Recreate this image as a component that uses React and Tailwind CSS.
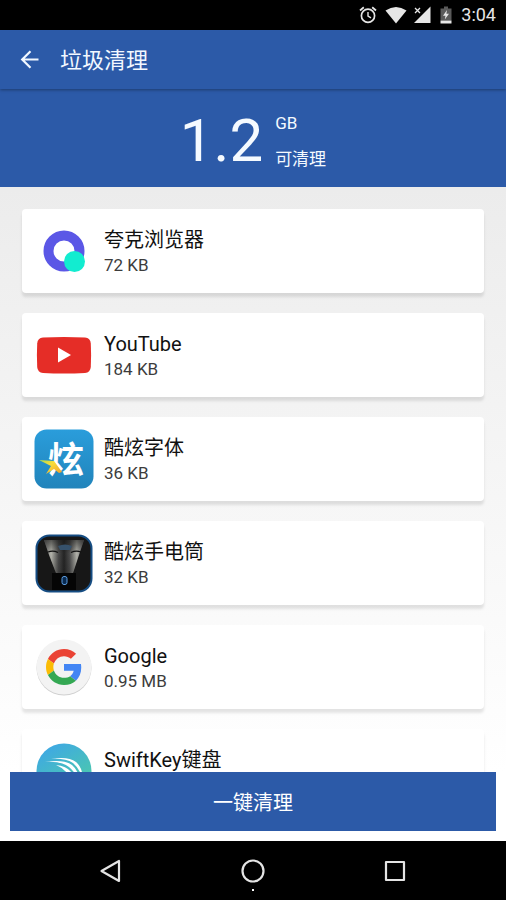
const QuarkIcon = () => (
  <svg viewBox="0 0 60 60" className="size-15" aria-hidden="true">
    <circle cx="30" cy="30" r="15.5" fill="none" stroke="#5b57e6" strokeWidth="10" />
    <circle cx="40.5" cy="40.5" r="10.5" fill="#12ecd0" />
  </svg>
);

const YouTubeIcon = () => (
  <svg viewBox="0 0 60 60" className="size-15" aria-hidden="true">
    <path
      d="M9 12.4Q30 11.4 51 12.4Q56.4 12.8 56.8 18.500Q57.4 30 56.8 42Q56.4 47.6 51 48Q30 49 9 48Q3.600 47.600 3.200 42Q2.600 30 3.200 18.500Q3.600 12.800 9 12.400Z"
      fill="#e52d27"
    />
    <path d="M24 22.500L37 30L24 37.500Z" fill="#fff" />
  </svg>
);

const FontIcon = () => (
  <svg viewBox="0 0 60 60" className="size-15 overflow-visible" aria-hidden="true">
    <defs>
      <linearGradient id="font-bg" x1="0" y1="0" x2="0" y2="1">
        <stop offset="0" stopColor="#2a9ddb" />
        <stop offset="1" stopColor="#2184bb" />
      </linearGradient>
      <linearGradient id="font-flash" x1="0" y1="0" x2="1" y2="1">
        <stop offset="0" stopColor="#a8d94c" />
        <stop offset="0.4" stopColor="#f7dd3a" />
        <stop offset="1" stopColor="#f3a02b" />
      </linearGradient>
    </defs>
    <rect x="0.500" y="0.500" width="59" height="59" rx="12" fill="url(#font-bg)" />
    <text
      x="14"
      y="44"
      fontSize="36"
      fontWeight="700"
      fill="#fff"
      fontFamily="'Noto Sans CJK SC', sans-serif"
    >
      炫
    </text>
    <path d="M5 31L20 32L28 43L25 44L20 40L12 45L17 37Z" fill="url(#font-flash)" />
  </svg>
);

const TorchIcon = () => (
  <svg viewBox="0 0 60 60" className="size-15" aria-hidden="true">
    <defs>
      <linearGradient id="torch-beam" x1="0" y1="0" x2="1" y2="0">
        <stop offset="0" stopColor="#6e6e6e" />
        <stop offset="0.18" stopColor="#b4b4ac" />
        <stop offset="0.36" stopColor="#4a4a4a" />
        <stop offset="0.5" stopColor="#242424" />
        <stop offset="0.64" stopColor="#4a4a4a" />
        <stop offset="0.82" stopColor="#b4b4ac" />
        <stop offset="1" stopColor="#606060" />
      </linearGradient>
      <linearGradient id="torch-fade" x1="0" y1="0" x2="0" y2="1">
        <stop offset="0" stopColor="#171717" stopOpacity="0.600" />
        <stop offset="0.4" stopColor="#171717" stopOpacity="0" />
        <stop offset="1" stopColor="#171717" stopOpacity="0.200" />
      </linearGradient>
    </defs>
    <rect x="2.500" y="2.500" width="55" height="56" rx="13" fill="#171717" stroke="#164d83" strokeWidth="2" />
    <path d="M10 7H50L45 22L39 40H22L15 22Z" fill="url(#torch-beam)" />
    <path d="M10 7H50L45 22L39 40H22L15 22Z" fill="url(#torch-fade)" />
    <path d="M14 19Q19 17 24 19.500M37 19.500Q42 17 47 19" stroke="#111" strokeWidth="1.200" fill="none" />
    <path d="M24 13Q31 10 38 13L36 17H26Z" fill="#36516b" />
    <path d="M18 40H42V57H18Z" fill="#050505" />
    <rect x="28" y="43.500" width="5" height="8" rx="2" fill="#092a50" stroke="#5c9ce0" strokeWidth="1" />
  </svg>
);

const GoogleIcon = () => (
  <svg viewBox="0 0 60 60" className="size-15" aria-hidden="true">
    <circle cx="30" cy="31" r="27.500" fill="#cfcfcf" />
    <circle cx="30" cy="30" r="27.500" fill="#f3f3f3" />
    <g transform="translate(12 12) scale(0.75)">
      <path
        fill="#ea4335"
        d="M24 9.500c3.540 0 6.710 1.220 9.210 3.600l6.850-6.850C35.900 2.380 30.470 0 24 0 14.620 0 6.510 5.380 2.560 13.220l7.980 6.190C12.430 13.720 17.740 9.500 24 9.500z"
      />
      <path
        fill="#4285f4"
        d="M46.980 24.550c0-1.570-.15-3.090-.38-4.550H24v9.020h12.940c-.58 2.960-2.260 5.480-4.780 7.180l7.730 6c4.510-4.180 7.090-10.360 7.090-17.650z"
      />
      <path
        fill="#fbbc05"
        d="M10.530 28.590c-.48-1.450-.76-2.990-.76-4.590s.27-3.140.76-4.590l-7.980-6.190C.92 16.460 0 20.120 0 24c0 3.880.92 7.540 2.560 10.780l7.970-6.190z"
      />
      <path
        fill="#34a853"
        d="M24 48c6.480 0 11.930-2.130 15.890-5.810l-7.730-6c-2.150 1.450-4.920 2.300-8.160 2.300-6.260 0-11.570-4.220-13.470-9.910l-7.980 6.190C6.510 42.620 14.620 48 24 48z"
      />
    </g>
  </svg>
);

const SwiftKeyIcon = () => (
  <svg viewBox="0 0 60 60" className="size-15" aria-hidden="true">
    <defs>
      <linearGradient id="swift-bg" x1="0.200" y1="0" x2="0.800" y2="1">
        <stop offset="0" stopColor="#3ea7e6" />
        <stop offset="1" stopColor="#4fd0a0" />
      </linearGradient>
    </defs>
    <circle cx="30" cy="30" r="27.500" fill="url(#swift-bg)" />
    <g fill="#fff">
      <path d="M17 18Q34 15 42 21Q49 27 48.500 38Q46 28 39 22Q31 17 17 18Z" />
      <path d="M11 21Q30 18 38 24Q45 30 45.500 40Q41 31 35 26Q27 20 11 21Z" />
      <path d="M22 24Q33 25 38 32Q41 37 41 42Q36 34 31 30Q27 26 22 24Z" />
    </g>
  </svg>
);

const apps = [
  { name: '夸克浏览器', size: '72 KB', Icon: QuarkIcon },
  { name: 'YouTube', size: '184 KB', Icon: YouTubeIcon },
  { name: '酷炫字体', size: '36 KB', Icon: FontIcon },
  { name: '酷炫手电筒', size: '32 KB', Icon: TorchIcon },
  { name: 'Google', size: '0.95 MB', Icon: GoogleIcon },
  { name: 'SwiftKey键盘', size: '', Icon: SwiftKeyIcon },
];

const StatusBar = () => (
  <div className="flex h-[30px] shrink-0 items-center justify-end bg-black pr-2.5 text-[#e6e6e6]">
    <svg viewBox="0 0 18 18" className="mr-2 size-[18px]" fill="none" stroke="currentColor" aria-hidden="true">
      <circle cx="9" cy="9.800" r="6.600" strokeWidth="1.700" />
      <path d="M9 6V10L12 11.800" strokeWidth="1.400" />
      <path d="M1 4.500L4.800 1.300M17 4.500L13.200 1.300" strokeWidth="1.800" />
    </svg>
    <svg viewBox="0 0 22 18" className="mr-1.5 h-[18px] w-[22px]" fill="currentColor" aria-hidden="true">
      <path d="M0.500 4.500Q11 -2.500 21.500 4.500L11 17.500Z" />
    </svg>
    <svg viewBox="0 0 18 18" className="mr-2 size-[18px]" aria-hidden="true">
      <path d="M17.500 0.500V17H1Z" fill="currentColor" />
      <path d="M0 0H9V8L6 10H0Z" fill="#000" />
      <path d="M2 2L7 7M7 2L2 7" stroke="currentColor" strokeWidth="1.300" />
    </svg>
    <svg viewBox="0 0 14 18" className="mr-2 h-[18px] w-3.5" aria-hidden="true">
      <path d="M5 0.500H9V2.500H12.500V14.500H1.500V2.500H5Z" fill="#5a5a5a" />
      <path d="M1.500 14.500H12.500V17.500H1.500Z" fill="currentColor" />
      <path d="M8 4L4 9.800H6.500L5.800 13.500L10 7.800H7.400Z" fill="currentColor" />
    </svg>
    <span className="text-[18px] leading-5">3:04</span>
  </div>
);

const AppCard = ({ name, size, Icon }) => (
  <li className="flex h-21 shrink-0 items-center gap-2.5 rounded-sm bg-white px-3 shadow-[0_4px_3px_rgba(0,0,0,0.1)]">
    <Icon />
    <div className="pt-0.5">
      <h2 className="text-[20px] leading-[26px] text-[#111]">{name}</h2>
      <p className="h-6 text-[17px] leading-6 text-[#3c3c3c]">{size}</p>
    </div>
  </li>
);

const NavBar = () => (
  <nav className="flex h-[59px] shrink-0 items-center justify-center gap-[106px] bg-black text-[#e4e4e4]">
    <button type="button" aria-label="返回" className="size-9 p-1.5">
      <svg viewBox="0 0 24 24" className="size-6" fill="none" stroke="currentColor" strokeWidth="2.200" strokeLinejoin="round">
        <path d="M20 2V22L2.500 12Z" />
      </svg>
    </button>
    <button type="button" aria-label="主屏幕" className="relative size-9 p-1.5">
      <svg viewBox="0 0 24 24" className="size-6" fill="none" stroke="currentColor" strokeWidth="2.200">
        <circle cx="12" cy="12" r="10.500" />
      </svg>
      <span className="absolute -bottom-0.5 left-1/2 size-0.5 -translate-x-1/2 bg-white" />
    </button>
    <button type="button" aria-label="最近任务" className="size-9 p-1.5">
      <svg viewBox="0 0 24 24" className="size-6" fill="none" stroke="currentColor" strokeWidth="2.200" strokeLinejoin="round">
        <rect x="3" y="3" width="18" height="18" />
      </svg>
    </button>
  </nav>
);

const App = () => (
  <div className="flex h-screen flex-col overflow-hidden bg-white font-[Roboto,'Noto_Sans_CJK_SC',sans-serif]">
    <StatusBar />

    <header className="z-10 flex h-[59px] shrink-0 items-center gap-[18px] bg-[#2c5aa8] px-[18px] text-[#f2f8ff] shadow-[0_1px_3px_rgba(0,0,0,0.35)]">
      <button type="button" aria-label="返回" className="size-6">
        <svg viewBox="0 0 24 24" className="size-6" fill="none" stroke="currentColor" strokeWidth="2.200">
          <path d="M20.500 11.500H4.500M12.500 3.200L4.200 11.500L12.500 19.800" />
        </svg>
      </button>
      <h1 className="pt-0.5 text-[22px] leading-7">垃圾清理</h1>
    </header>

    <section className="flex h-[98px] shrink-0 items-center justify-center gap-3 bg-[#2c5aa8] pt-1.5 text-[#f5faff]">
      <p className="text-[60px] leading-[72px]">1.2</p>
      <div className="flex flex-col gap-3 text-[17px] leading-6">
        <p>GB</p>
        <p>可清理</p>
      </div>
    </section>

    <main className="min-h-0 flex-1 overflow-hidden bg-linear-to-b from-[#ececec] to-white">
      <ul className="flex flex-col gap-5 px-[22px] pt-[22px]">
        {apps.map((app) => (
          <AppCard key={app.name} {...app} />
        ))}
      </ul>
    </main>

    <div className="shrink-0 px-2.5 pb-2.5">
      <button type="button" className="h-[59px] w-full bg-[#2c5aa8] pt-0.5 text-[20px] leading-7 text-white">
        一键清理
      </button>
    </div>

    <NavBar />
  </div>
);

export default App;
